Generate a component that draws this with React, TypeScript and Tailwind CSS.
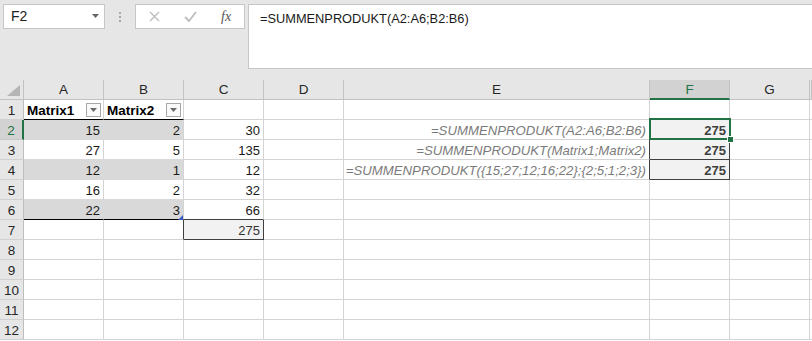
import React from 'react';

const COLS = ['A', 'B', 'C', 'D', 'E', 'F', 'G', ''];

const AV: Record<number, string | number> = { 1: 'Matrix1', 2: 15, 3: 27, 4: 12, 5: 16, 6: 22 };
const BV: Record<number, string | number> = { 1: 'Matrix2', 2: 2, 3: 5, 4: 1, 5: 2, 6: 3 };
const CV: Record<number, number> = { 2: 30, 3: 135, 4: 12, 5: 32, 6: 66, 7: 275 };
const EV: Record<number, string> = {
  2: '=SUMMENPRODUKT(A2:A6;B2:B6)',
  3: '=SUMMENPRODUKT(Matrix1;Matrix2)',
  4: '=SUMMENPRODUKT({15;27;12;16;22};{2;5;1;2;3})',
};
const FV: Record<number, number> = { 2: 275, 3: 275, 4: 275 };

function FilterBtn() {
  return (
    <div className="absolute right-[2px] top-[3px] w-[15px] h-[14px] border border-[#a8a8a8] bg-[#fafafa] flex items-center justify-center">
      <svg width="7" height="4" viewBox="0 0 7 4">
        <polygon points="0,0 7,0 3.5,4" fill="#6a6a6a" />
      </svg>
    </div>
  );
}

function DataCell({ r, c }: { r: number; c: number }) {
  let bg = 'bg-white';
  let br = 'border-r-[#d4d4d4]';
  let bb = 'border-b-[#d4d4d4]';
  let content: React.ReactNode = null;
  let align = 'justify-end';
  let text = 'text-[13px] text-[#1a1a1a]';
  let extra: React.ReactNode = null;

  const inTable = (c === 0 || c === 1) && r >= 1 && r <= 6;
  if (inTable) {
    const banded = r === 2 || r === 4 || r === 6;
    bg = banded ? 'bg-[#d9d9d9]' : 'bg-white';
    if (r === 1) {
      bb = 'border-b-[#000000]';
      align = 'justify-start';
      text = 'text-[13.5px] font-bold text-[#000000]';
      extra = <FilterBtn />;
    } else if (r === 6) {
      bb = 'border-b-[#000000]';
    } else {
      bb = 'border-b-[#d9d9d9]';
    }
    if (c === 0 && banded) br = 'border-r-[#d9d9d9]';
    content = c === 0 ? AV[r] : BV[r];
    if (c === 1 && r === 6) {
      extra = (
        <svg className="absolute right-[0px] bottom-[-1px]" width="5" height="5" viewBox="0 0 5 5">
          <polygon points="5,0 5,5 0,5" fill="#3b5cc4" />
        </svg>
      );
    }
  }
  if (c === 1 && r === 7) br = 'border-r-[#3f3f3f]';
  if (c === 2) {
    if (CV[r] !== undefined) content = CV[r];
    if (r === 6) bb = 'border-b-[#3f3f3f]';
    if (r === 7) {
      bg = 'bg-[#f2f2f2]';
      br = 'border-r-[#3f3f3f]';
      bb = 'border-b-[#3f3f3f]';
      text = 'text-[13px] text-[#333333]';
    }
  }
  if (c === 4) {
    if (EV[r]) {
      content = EV[r];
      text = "text-[13.2px] italic text-[#7b7b7b]";
      br = 'border-r-[#3f3f3f]';
    }
  }
  if (c === 5) {
    if (r === 1) bb = 'border-b-[#3f3f3f]';
    if (FV[r]) {
      content = FV[r];
      bg = 'bg-[#f2f2f2]';
      br = 'border-r-[#3f3f3f]';
      bb = 'border-b-[#3f3f3f]';
      text = 'text-[13px] font-bold text-[#3f3f3f]';
    }
    if (r === 2) {
      extra = (
        <>
          <div className="absolute left-[-1px] top-[-2px] w-[82px] h-[22px] border-2 border-[#217346] z-10 pointer-events-none" />
          <div className="absolute left-[77px] top-[16px] w-[7px] h-[7px] bg-[#217346] border border-white z-20" />
        </>
      );
    }
  }
  if (c === 7) {
    br = 'border-r-transparent';
  }

  return (
    <div className={`relative h-[20px] border-r border-b ${br} ${bb} ${bg} flex items-center ${align} px-[3px] pt-[2px] whitespace-nowrap leading-none ${text}`}>
      {content}
      {extra}
    </div>
  );
}

export default function App() {
  const rows = Array.from({ length: 12 }, (_, i) => i + 1);
  return (
    <div className="w-[812px] h-[341px] overflow-hidden bg-white font-['Liberation_Sans',Arial,sans-serif] select-none">
      {/* Top bar */}
      <div className="h-[80px] bg-[#e6e6e6] flex items-start pt-[4px] pl-[3px]">
        <div className="relative w-[102px] h-[25px] bg-white border border-[#c6c6c6] flex items-center pl-[7px] text-[14px] text-[#222]">
          F2
          <svg className="absolute left-[88px] top-[9px]" width="7" height="4" viewBox="0 0 7 4">
            <polygon points="0,0 7,0 3.5,4" fill="#666" />
          </svg>
        </div>
        <div className="w-[30px] h-[25px] flex flex-col items-center justify-center gap-[2px]">
          <div className="w-[2px] h-[2px] bg-[#a6a6a6]" />
          <div className="w-[2px] h-[2px] bg-[#a6a6a6]" />
          <div className="w-[2px] h-[2px] bg-[#a6a6a6]" />
        </div>
        <div className="w-[110px] h-[25px] bg-white border border-[#c6c6c6] flex items-center">
          <svg className="ml-[13px]" width="11" height="11" viewBox="0 0 11 11">
            <path d="M1 1 L10 10 M10 1 L1 10" stroke="#bdbdbd" strokeWidth="1.4" fill="none" />
          </svg>
          <svg className="ml-[24px]" width="13" height="11" viewBox="0 0 13 11">
            <path d="M1 6 L5 10 L12 1" stroke="#bdbdbd" strokeWidth="1.8" fill="none" />
          </svg>
          <span className="ml-[24px] font-['Liberation_Serif',serif] italic text-[14px] text-[#555] leading-none">fx</span>
        </div>
        <div className="ml-[3px] flex-1 h-[65px] bg-white border border-r-0 border-[#c6c6c6] pl-[11px] pt-[4px] text-[12.8px] text-[#1a1a1a] mr-[-4px]">
          =SUMMENPRODUKT(A2:A6;B2:B6)
        </div>
      </div>

      {/* Sheet grid */}
      <div className="grid grid-cols-[24px_80px_80px_80px_80px_306px_80px_80px_2px]">
        {/* header row */}
        <div className="relative h-[20px] bg-[#e6e6e6] border-r border-b border-[#c2c2c2]">
          <svg className="absolute left-[6px] top-[4px]" width="14" height="12" viewBox="0 0 14 12">
            <polygon points="1,12 14,12 14,1" fill="#b5b5b5" />
          </svg>
        </div>
        {COLS.map((c, i) =>
          c === 'F' ? (
            <div key={i} className="h-[20px] bg-[#d2d2d2] border-r border-r-[#c2c2c2] border-b-2 border-b-[#217346] flex items-center justify-center text-[13.5px] text-[#217346] leading-none pt-[2px]">
              {c}
            </div>
          ) : (
            <div key={i} className="h-[20px] bg-[#e6e6e6] border-r border-b border-[#c2c2c2] flex items-center justify-center text-[13.5px] text-[#262626] leading-none pt-[1px]">
              {c}
            </div>
          )
        )}
        {rows.map((r) => (
          <React.Fragment key={r}>
            {r === 2 ? (
              <div className="h-[20px] bg-[#d2d2d2] border-b border-b-[#c8c8c8] border-r-2 border-r-[#217346] flex items-center justify-center text-[13.5px] text-[#217346] leading-none pt-[2px]">
                {r}
              </div>
            ) : (
              <div className="h-[20px] bg-[#e6e6e6] border-r border-r-[#bdbdbd] border-b border-b-[#d0d0d0] flex items-center justify-center text-[13.5px] text-[#262626] leading-none pt-[2px]">
                {r}
              </div>
            )}
            {COLS.map((_, c) => (
              <DataCell key={c} r={r} c={c} />
            ))}
          </React.Fragment>
        ))}
      </div>
    </div>
  );
}
